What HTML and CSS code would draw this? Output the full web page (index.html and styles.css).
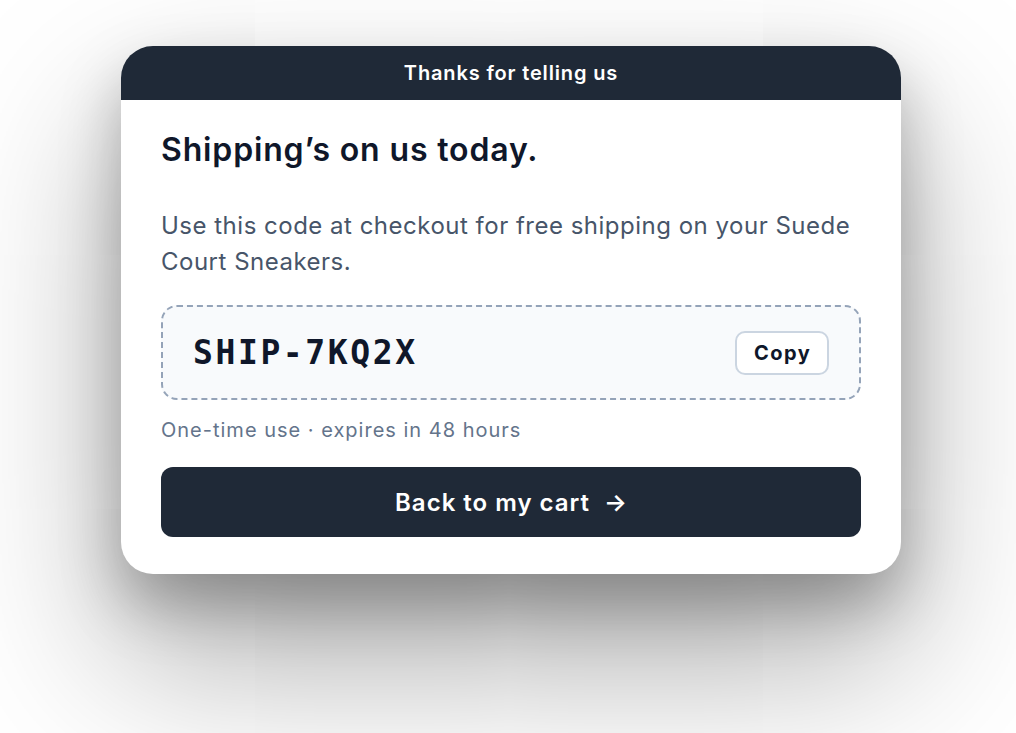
FILE: index.html
```html
<!DOCTYPE html>
<html lang="en">
<head>
<meta charset="utf-8">
<title>Shipping's on us</title>
<link rel="stylesheet" href="styles.css">
</head>
<body>
<div class="page">
  <div class="card">
    <div class="card-header">Thanks for telling us</div>
    <div class="card-body">
      <h1 class="title">Shipping’s on us today.</h1>
      <p class="lead">Use this code at checkout for free shipping on your Suede Court Sneakers.</p>
      <div class="code-box">
        <span class="code">SHIP-7KQ2X</span>
        <button class="copy-btn" type="button">Copy</button>
      </div>
      <p class="note">One-time use · expires in 48 hours</p>
      <button class="primary-btn" type="button"><span>Back to my cart</span><span class="arrow">→</span></button>
    </div>
  </div>
</div>
</body>
</html>
```

FILE: styles.css
```css
* { box-sizing: border-box; }
html, body {
  margin: 0;
  padding: 0;
  background: #ffffff;
  font-family: Inter, "Noto Sans", sans-serif;
}
.page {
  padding: 46px 0 0 121px;
  min-height: 733px;
}
.card {
  width: 780px;
  background: #ffffff;
  border-radius: 32px;
  overflow: hidden;
  box-shadow: 0 30px 60px rgba(0, 0, 0, 0.26), 0 80px 170px rgba(0, 0, 0, 0.36);
}
.card-header {
  height: 54px;
  background: #1f2937;
  color: #ffffff;
  font-size: 20px;
  font-weight: 600;
  letter-spacing: 0.85px;
  display: flex;
  align-items: center;
  justify-content: center;
}
.card-body {
  padding: 32px 40px 37px;
}
.title {
  margin: 0;
  font-size: 32px;
  line-height: 36px;
  font-weight: 620;
  letter-spacing: 0.85px;
  color: #0f172a;
}
.lead {
  margin: 40px 0 0;
  font-size: 24px;
  line-height: 36px;
  letter-spacing: 0.5px;
  color: #475569;
}
.code-box {
  margin-top: 25px;
  height: 95px;
  border: 2px dashed #94a3b8;
  border-radius: 16px;
  background: #f8fafc;
  display: flex;
  align-items: center;
  justify-content: space-between;
  padding: 0 30px;
}
.code {
  font-family: "DejaVu Sans Mono", "Liberation Mono", monospace;
  font-weight: 700;
  font-size: 33px;
  letter-spacing: 2.6px;
  color: #0f172a;
}
.copy-btn {
  width: 94px;
  height: 44px;
  border: 2px solid #cbd5e1;
  border-radius: 10px;
  background: #ffffff;
  font-family: inherit;
  font-size: 20px;
  font-weight: 700;
  letter-spacing: 1.5px;
  text-indent: 1.5px;
  color: #0f172a;
  padding: 0;
}
.note {
  margin: 16px 0 0;
  font-size: 20px;
  line-height: 28px;
  letter-spacing: 1px;
  color: #64748b;
}
.primary-btn {
  margin-top: 23px;
  width: 100%;
  height: 70px;
  border: 0;
  border-radius: 12px;
  background: #1f2937;
  color: #ffffff;
  font-family: inherit;
  font-size: 24px;
  font-weight: 600;
  letter-spacing: 1px;
  display: flex;
  align-items: center;
  justify-content: center;
  gap: 14px;
}
.arrow {
  font-size: 24px;
  letter-spacing: 0;
}
```
